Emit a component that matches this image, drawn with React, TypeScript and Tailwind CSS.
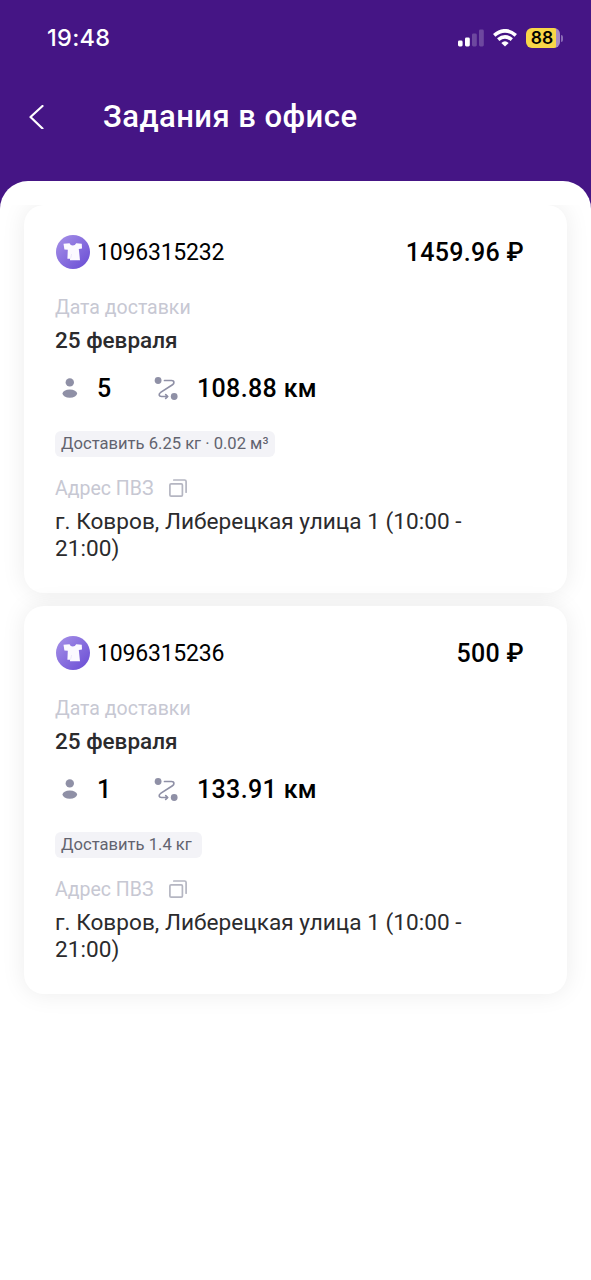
import React from 'react';

interface Task {
  id: string;
  price: string;
  date: string;
  people: number;
  distance: string;
  cargo: string;
  address: string;
}

const tasks: Task[] = [
  {
    id: '1096315232',
    price: '1459.96 ₽',
    date: '25 февраля',
    people: 5,
    distance: '108.88 км',
    cargo: 'Доставить 6.25 кг · 0.02 м³',
    address: 'г. Ковров, Либерецкая улица 1 (10:00 - 21:00)',
  },
  {
    id: '1096315236',
    price: '500 ₽',
    date: '25 февраля',
    people: 1,
    distance: '133.91 км',
    cargo: 'Доставить 1.4 кг\u00a0',
    address: 'г. Ковров, Либерецкая улица 1 (10:00 - 21:00)',
  },
];

const ShirtIcon: React.FC = () => (
  <svg className="w-[34px] h-[34px]" viewBox="0 0 34 34">
    <defs>
      <linearGradient id="shirt" x1="0" y1="0" x2="1" y2="1">
        <stop offset="0.1" stopColor="#a18be6" />
        <stop offset="0.9" stopColor="#6e52d6" />
      </linearGradient>
    </defs>
    <circle cx="17" cy="17" r="17" fill="url(#shirt)" />
    <path d="M7.5 8.8 L13.5 8.2 Q14.4 10.4 16.8 10.4 Q19.2 10.4 20.2 8.2 L25.8 8.8 L26 13.6 L22.8 14 L24 25.2 L14 25.2 L14 23.8 L11.4 23.8 L11.8 14.8 L8.4 14.6 Z" fill="#fbf9ff" />
    <path d="M15.6 19 L14.6 23.6" stroke="#e2daf9" strokeWidth="0.6" fill="none" />
  </svg>
);

const PersonIcon: React.FC = () => (
  <svg className="w-4 h-6" viewBox="0 0 16 24" fill="#8f90a6">
    <circle cx="7.8" cy="5.4" r="4.2" />
    <ellipse cx="7.8" cy="16.6" rx="7.3" ry="4.2" />
  </svg>
);

const RouteIcon: React.FC = () => (
  <svg className="w-6 h-6" viewBox="0 0 24 24" fill="none" stroke="#8f90a6" strokeWidth="1.7" strokeLinecap="round" strokeLinejoin="round">
    <circle cx="4.1" cy="3.5" r="3.4" fill="#8f90a6" stroke="none" />
    <circle cx="20.2" cy="19.5" r="3.4" fill="#8f90a6" stroke="none" />
    <path d="M10.5 3.5 H17.5 C20.5 3.5 20.5 6.5 18.5 7.8 L7 15.1 C4 17.2 5 19.5 7.5 19.5 H13.3" />
    <path d="M11.7 17.6 L13.7 19.5 L11.7 21.4" />
  </svg>
);

const CopyIcon: React.FC = () => (
  <svg className="w-[18px] h-[18px]" viewBox="0 0 18 18" fill="none" stroke="#b5b6c2" strokeWidth="1.7" strokeLinecap="round" strokeLinejoin="round">
    <rect x="0.9" y="4.8" width="12.5" height="12.3" rx="1.2" />
    <path d="M4.8 1 H15.6 Q17.1 1 17.1 2.5 V13.2" />
  </svg>
);

const StatusBar: React.FC = () => (
  <div className="flex h-[76px] items-center justify-between pl-[47px] pr-[28px]">
    <span className="font-['Inter'] text-[23.5px] font-medium leading-7 tracking-[0.3px]">19:48</span>
    <div className="flex items-center">
      <svg className="mr-[1px] w-[26px] h-[18px]" viewBox="0 0 26 18" fill="#fff">
        <rect x="0" y="11.5" width="4.6" height="6" rx="1.4" />
        <rect x="7" y="8.5" width="4.8" height="9" rx="1.4" />
        <rect x="14" y="4.5" width="4.8" height="13" rx="1.4" opacity="0.22" />
        <rect x="21" y="0.5" width="4.8" height="17" rx="1.4" opacity="0.22" />
      </svg>
      <svg className="ml-2 w-6 h-[18px]" viewBox="0 0 24 18" fill="none" stroke="#fff" strokeWidth="3.6">
        <path d="M1.2 6.4 Q12 -2.8 22.8 6.4" />
        <path d="M5.2 10.6 Q12 5 18.8 10.6" />
        <path d="M12 17.6 L8.3 13.9 Q12 10.8 15.7 13.9 Z" fill="#fff" stroke="none" />
      </svg>
      <div className="ml-[9px] flex h-5 w-[34px] items-center justify-center rounded-[6px] bg-[linear-gradient(90deg,#f8d648_89%,#a58bc4_89%)] pr-0.5 font-['Inter'] text-[17.5px] font-semibold leading-5 text-black">
        88
      </div>
      <div className="ml-[1px] h-[7px] w-[2px] rounded-r-full bg-[#8a6ab5]" />
    </div>
  </div>
);

const TaskCard: React.FC<{ task: Task }> = ({ task }) => (
  <article className="rounded-[20px] bg-white pt-[30px] pr-[43px] pb-[31px] pl-[31px] shadow-[0_0_24px_rgba(0,0,0,0.08)]">
    <div className="flex h-[34px] items-center">
      <div className="ml-[1px]"><ShirtIcon /></div>
      <span className="ml-[7px] pt-[2px] text-[23px] tracking-[-0.2px] text-black">{task.id}</span>
      <span className="ml-auto pt-[1px] text-[25px] font-medium tracking-[0.3px] text-black">{task.price}</span>
    </div>

    <div className="mt-[27px] h-6 text-[19.5px] leading-6 text-[#c7c8d3]">Дата доставки</div>
    <div className="mt-[6px] h-7 text-[22.5px] font-medium leading-7 text-[#2b2b2d]">{task.date}</div>

    <div className="mt-[21px] flex h-7 items-center text-[25px] font-medium tracking-[0.35px] text-black">
      <div className="ml-[7px]"><PersonIcon /></div>
      <span className="ml-[19px] w-[57px]">{task.people}</span>
      <RouteIcon />
      <span className="ml-[19px]">{task.distance}</span>
    </div>

    <div className="mt-[28px] flex h-[26px] w-fit items-center rounded-[6px] bg-[#f3f3f7] px-1.5 text-[16.6px] text-[#62636f]">
      {task.cargo}
    </div>

    <div className="mt-[19px] flex h-6 items-center text-[19.5px] text-[#c7c8d3]">
      <span className="w-[114px] pt-[1px]">Адрес ПВЗ</span>
      <CopyIcon />
    </div>
    <p className="mt-2 w-[430px] text-[22.6px] leading-[27px] tracking-[0.03px] text-[#2b2b2d]">{task.address}</p>
  </article>
);

export default function App() {
  return (
    <div className="flex h-[1280px] w-[591px] flex-col overflow-hidden bg-[#451585] font-['Roboto',sans-serif]">
      <header className="h-[181px] shrink-0 text-white">
        <StatusBar />
        <div className="flex h-[82px] items-center pl-[29px]">
          <svg className="w-4 h-6" viewBox="0 0 16 24" fill="none" stroke="#fff" strokeWidth="2.2" strokeLinecap="round" strokeLinejoin="round">
            <path d="M13.5 1 L1.5 12 L13.5 23.5" />
          </svg>
          <h1 className="ml-[58px] text-[31px] font-medium tracking-[0.45px]">Задания в офисе</h1>
        </div>
      </header>
      <main className="flex-1 rounded-t-[28px] bg-white pt-6">
        <div className="flex h-full flex-col gap-[13px] overflow-hidden px-6">
          {tasks.map((task) => (
            <TaskCard key={task.id} task={task} />
          ))}
        </div>
      </main>
    </div>
  );
}
